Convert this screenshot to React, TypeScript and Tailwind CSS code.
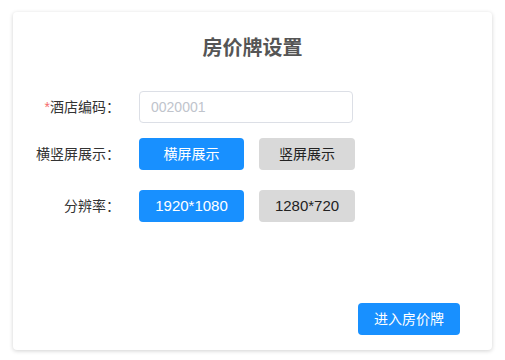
const App = () => {
    return (
        <div className="w-[505px] h-[360px] bg-white pt-[12px] pl-[13px] font-['Liberation_Sans','Noto_Sans_CJK_SC',sans-serif]">
            <div className="w-[479px] h-[338px] bg-white rounded-[4px] shadow-[0_1px_4px_rgba(0,0,0,0.18)] flex flex-col relative">
                <div className="pt-[24px] text-center text-[20px] leading-[24px] font-bold text-[#555]">房价牌设置</div>

                <div className="flex items-center mt-[31px] h-[32px]">
                    <div className="w-[107px] text-right text-[14px] text-[#333]">
                        <span className="text-[#f56c6c]">*</span>酒店编码：
                    </div>
                    <input
                        placeholder="0020001"
                        className="ml-[19px] w-[214px] h-[32px] border border-[#dcdfe6] rounded-[4px] px-[11px] text-[14px] placeholder:text-[#c0c4cc] outline-none"
                    />
                </div>

                <div className="flex items-center mt-[15px] h-[32px]">
                    <div className="w-[107px] text-right text-[14px] text-[#333]">横竖屏展示：</div>
                    <button className="ml-[19px] w-[105px] h-[32px] rounded-[4px] bg-[#1890ff] text-white text-[14px]">横屏展示</button>
                    <button className="ml-[15px] w-[96px] h-[32px] rounded-[4px] bg-[#d9d9d9] text-[#222] text-[14px]">竖屏展示</button>
                </div>

                <div className="flex items-center mt-[20px] h-[32px]">
                    <div className="w-[107px] text-right text-[14px] text-[#333]">分辨率：</div>
                    <button className="ml-[19px] w-[105px] h-[32px] rounded-[4px] bg-[#1890ff] text-white text-[15px]">1920*1080</button>
                    <button className="ml-[15px] w-[96px] h-[32px] rounded-[4px] bg-[#d9d9d9] text-[#222] text-[15px]">1280*720</button>
                </div>

                <div className="flex justify-end mt-auto mb-[15px] pr-[32px]">
                    <button className="w-[102px] h-[32px] rounded-[4px] bg-[#1890ff] text-white text-[14px]">进入房价牌</button>
                </div>
            </div>
        </div>
    )
}

export default App
